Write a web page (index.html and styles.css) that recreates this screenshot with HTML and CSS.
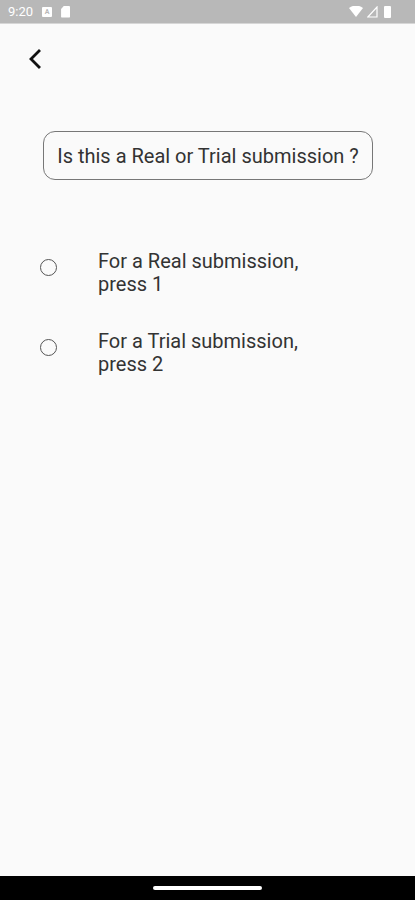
FILE: index.html
```html
<!DOCTYPE html>
<html lang="en">
<head>
    <meta charset="UTF-8">
    <meta name="viewport" content="width=device-width, initial-scale=1.0">
    <title>Submission type</title>
    <link rel="stylesheet" href="styles.css">
</head>
<body>
    <div class="phone">
        <div class="status-bar">
            <div class="status-left">
                <span class="clock">9:20</span>
                <span class="notif-a">A</span>
                <span class="notif-sd"></span>
            </div>
            <div class="status-right">
                <svg width="14" height="12" viewBox="0 0 14 12">
                    <path d="M0 2 Q7 -3 14 2 L7 11 Z" fill="#fff"/>
                </svg>
                <svg width="11" height="12" viewBox="0 0 11 12">
                    <path d="M10 1 L10 11 L0.8 11 Z" fill="none" stroke="#fff" stroke-width="1.2"/>
                </svg>
                <span class="battery"></span>
            </div>
        </div>

        <main class="content">
            <button class="back-button" aria-label="Back">
                <svg width="14" height="20" viewBox="0 0 14 20">
                    <path d="M11 2 L3 10 L11 18" fill="none" stroke="#111" stroke-width="2.8" stroke-linecap="square"/>
                </svg>
            </button>

            <div class="question">Is this a Real or Trial submission ?</div>

            <ul class="options">
                <li class="option">
                    <span class="radio"></span>
                    <span class="option-text">For a Real submission,<br>press 1</span>
                </li>
                <li class="option">
                    <span class="radio"></span>
                    <span class="option-text">For a Trial submission,<br>press 2</span>
                </li>
            </ul>
        </main>

        <div class="nav-bar">
            <span class="home-indicator"></span>
        </div>
    </div>
</body>
</html>
```

FILE: styles.css
```css
* {
    margin: 0;
    padding: 0;
    box-sizing: border-box;
}

body {
    font-family: Roboto, "Noto Sans", sans-serif;
    background: #fafafa;
    color: #222;
}

.phone {
    width: 415px;
    height: 900px;
    display: flex;
    flex-direction: column;
}

.status-bar {
    height: 24px;
    background: #b8b8b8;
    border-bottom: 1px solid #d6d6d6;
    display: flex;
    align-items: center;
    justify-content: space-between;
    padding: 0 24px 0 8px;
    color: #fff;
}

.status-left,
.status-right {
    display: flex;
    align-items: center;
    gap: 9px;
}

.status-right {
    gap: 4px;
}

.clock {
    font-size: 13px;
}

.notif-a {
    width: 10px;
    height: 10px;
    background: #fff;
    color: #b8b8b8;
    font-size: 7px;
    font-weight: bold;
    display: flex;
    align-items: center;
    justify-content: center;
    border-radius: 1px;
}

.notif-sd {
    width: 9px;
    height: 12px;
    background: #fff;
    border-radius: 1px;
    clip-path: polygon(35% 0, 100% 0, 100% 100%, 0 100%, 0 30%);
}

.battery {
    width: 7px;
    height: 12px;
    background: #fff;
    border-radius: 1px;
    margin-left: 2px;
}

.content {
    flex: 1;
    padding: 0 42px 0 34px;
}

.back-button {
    display: block;
    border: none;
    background: none;
    margin: 25px 0 0 -9px;
    width: 20px;
    height: 20px;
    cursor: pointer;
}

.question {
    margin: 62px 0 0 9px;
    height: 49px;
    border: 1px solid #777;
    border-radius: 12px;
    display: flex;
    align-items: center;
    justify-content: center;
    font-size: 20px;
    color: #333;
}

.options {
    list-style: none;
    margin-top: 70px;
    display: flex;
    flex-direction: column;
    gap: 34px;
}

.option {
    display: flex;
    align-items: flex-start;
    gap: 41px;
    padding-left: 6px;
}

.radio {
    width: 17px;
    height: 17px;
    margin-top: 9px;
    border: 1.8px solid #555;
    border-radius: 50%;
    flex-shrink: 0;
}

.option-text {
    font-size: 20px;
    line-height: 23px;
    color: #333;
}

.nav-bar {
    height: 24px;
    background: #000;
    display: flex;
    align-items: center;
    justify-content: center;
}

.home-indicator {
    width: 109px;
    height: 4px;
    background: #fff;
    border-radius: 2px;
}
```
